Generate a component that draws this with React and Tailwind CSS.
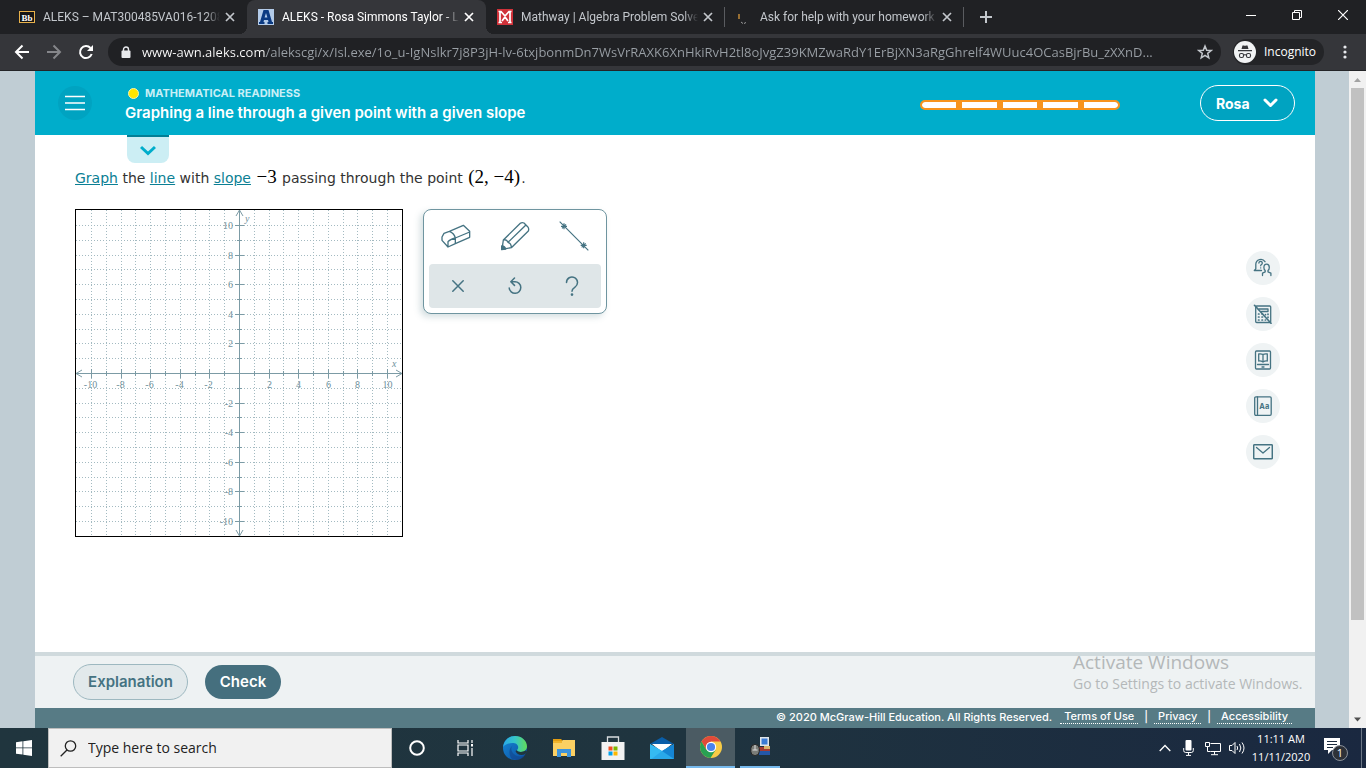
import React from "react";

const UI = "font-['Open_Sans','Noto_Sans',sans-serif]";
const COMPACT = "font-['Roboto','Noto_Sans',sans-serif]";
const BRAND = "font-['Inter','Liberation_Sans',sans-serif]";

/* ---------- browser chrome ---------- */

function CloseGlyph({ className = "" }) {
  return (
    <svg width="10" height="10" viewBox="0 0 10 10" className={className} fill="none" stroke="currentColor" strokeWidth="1.7">
      <path d="M1 1l8 8M9 1L1 9" />
    </svg>
  );
}

function BlackboardIcon() {
  return (
    <svg width="16" height="16" viewBox="0 0 16 16">
      <rect x="0.5" y="2.5" width="15" height="11" fill="#151515" stroke="#e8b14a" />
      <text x="8" y="11.5" fontSize="9" fontWeight="700" textAnchor="middle" fill="#fff" fontFamily="Liberation Serif, serif">Bb</text>
    </svg>
  );
}

function AleksIcon() {
  return (
    <svg width="16" height="16" viewBox="0 0 16 16">
      <rect width="16" height="16" fill="#b3cbe9" />
      <path fillRule="evenodd" fill="#0b3a82" d="M5.500 1h5l3.500 12h1v2h-5.500v-2h1l-.5-2H6l-.5 2h1v2H1v-2h1zM8 4L6.600 8.500h2.800z" />
    </svg>
  );
}

function MathwayIcon() {
  return (
    <svg width="16" height="16" viewBox="0 0 16 16">
      <rect width="16" height="16" fill="#d0323a" />
      <path d="M1.500 2.500H4l4 4.500 4-4.500h2.500M3 3v10M13 3v10M1.500 13.500h3.500M11 13.500h3.500M5 12l3-4 3 4" fill="none" stroke="#fff" strokeWidth="1.700" />
    </svg>
  );
}

function HelpSiteIcon() {
  return (
    <svg width="16" height="16" viewBox="0 0 16 16">
      <path d="M3 5v5" stroke="#d99a3c" strokeWidth="1.300" />
      <path d="M5 13l2 1.500M10 13.500l-2 1" stroke="#9a9a9a" strokeWidth="1" />
    </svg>
  );
}

function Tab({ icon, title, active, divider }) {
  return (
    <div className={"relative flex h-full w-[239px] items-center pl-[11px] " + (active ? "rounded-t-lg bg-[#35363a]" : "")}>
      {active && (
        <>
          <span className="absolute bottom-0 -left-2 size-2 bg-[radial-gradient(circle_at_0_0,transparent_8px,#35363a_8px)]" />
          <span className="absolute -right-2 bottom-0 size-2 bg-[radial-gradient(circle_at_100%_0,transparent_8px,#35363a_8px)]" />
        </>
      )}
      <button type="button" className="flex min-w-0 flex-1 items-center gap-2 text-left">
        <span className="shrink-0">{icon}</span>
        <span
          className={
            "min-w-0 flex-1 text-[12px] leading-4 whitespace-nowrap [mask-image:linear-gradient(to_right,#000_92%,transparent)] " +
            COMPACT +
            (active ? " text-white" : " text-[#c3c7cc]")
          }
        >
          {title}
        </span>
      </button>
      <button type="button" aria-label="Close tab" className={"mr-[7px] flex size-5 items-center justify-center " + (active ? "text-white" : "text-[#c3c7cc]")}>
        <CloseGlyph />
      </button>
      {divider && <span className="absolute top-[7px] right-0 h-5 w-px bg-[#5a5c60]" />}
    </div>
  );
}

function TabStrip() {
  return (
    <div className="flex h-[34px] shrink-0 bg-[#202124] pl-2">
      <Tab icon={<BlackboardIcon />} title="ALEKS – MAT300485VA016-1208" />
      <Tab active icon={<AleksIcon />} title="ALEKS - Rosa Simmons Taylor - Le" />
      <Tab divider icon={<MathwayIcon />} title="Mathway | Algebra Problem Solve" />
      <Tab divider icon={<HelpSiteIcon />} title="Ask for help with your homework" />
      <button type="button" aria-label="New tab" className="flex w-11 items-center justify-center text-[#c3c7cc]">
        <svg width="12" height="12" viewBox="0 0 12 12" stroke="currentColor" strokeWidth="2"><path d="M6 0v12M0 6h12" /></svg>
      </button>
      <div className="ml-auto flex h-[29px] text-white">
        <button type="button" aria-label="Minimize" className="flex w-[46px] items-center justify-center">
          <svg width="10" height="10" viewBox="0 0 10 10" stroke="currentColor"><path d="M0 5.500h10" /></svg>
        </button>
        <button type="button" aria-label="Restore" className="flex w-[46px] items-center justify-center">
          <svg width="10" height="10" viewBox="0 0 10 10" stroke="currentColor" fill="none"><path d="M.5 2.500h7v7h-7zM2.500 2.500v-2h7v7h-2" /></svg>
        </button>
        <button type="button" aria-label="Close" className="flex w-[46px] items-center justify-center">
          <svg width="10" height="10" viewBox="0 0 10 10" stroke="currentColor" strokeWidth="1.200"><path d="M0 0l10 10M10 0L0 10" /></svg>
        </button>
      </div>
    </div>
  );
}

function Toolbar() {
  return (
    <div className="flex h-[37px] shrink-0 items-center border-b border-[#232427] bg-[#35363a]">
      <div className="flex w-[108px] shrink-0 items-center pl-[14px] text-white">
        <button type="button" aria-label="Back" className="flex w-8">
          <svg width="16" height="16" viewBox="0 0 16 16" fill="none" stroke="currentColor" strokeWidth="2"><path d="M15 8H2M8.500 1.500L2 8l6.500 6.500" /></svg>
        </button>
        <button type="button" aria-label="Forward" className="flex w-8 text-[#85868a]">
          <svg width="16" height="16" viewBox="0 0 16 16" fill="none" stroke="currentColor" strokeWidth="2"><path d="M1 8h13M7.500 1.500L14 8l-6.500 6.500" /></svg>
        </button>
        <button type="button" aria-label="Reload" className="flex">
          <svg width="16" height="16" viewBox="0 0 16 16" fill="none"><path d="M13.700 10A6 6 0 1 1 12.500 4" stroke="#fff" strokeWidth="2" /><path d="M15 1v6H9z" fill="#fff" /></svg>
        </button>
      </div>
      <div className="flex h-7 min-w-0 flex-1 items-center rounded-full bg-[#202124] pr-2 pl-[13px]">
        <svg width="10" height="13" viewBox="0 0 10 13" className="shrink-0"><path d="M2.500 5V3.500a2.500 2.500 0 0 1 5 0V5" fill="none" stroke="#e8eaed" strokeWidth="1.400" /><rect x="0.500" y="4.500" width="9" height="7.500" rx="1" fill="#e8eaed" /></svg>
        <input
          type="text"
          aria-label="Address"
          readOnly
          className="ml-[11px] min-w-0 flex-1 bg-[linear-gradient(to_right,#ffffff_124px,#9aa0a6_124px)] bg-clip-text text-[13px] leading-5 text-transparent outline-none"
          value="www-awn.aleks.com/alekscgi/x/Isl.exe/1o_u-IgNslkr7j8P3jH-lv-6txjbonmDn7WsVrRAXK6XnHkiRvH2tl8oJvgZ39KMZwaRdY1ErBjXN3aRgGhrelf4WUuc4OCasBjrBu_zXXnD..."
        />
        <button type="button" aria-label="Bookmark" className="ml-3">
          <svg width="16" height="16" viewBox="0 0 16 16" fill="none" stroke="#c3c7cc" strokeWidth="1.500"><path d="M8 2l1.700 4.200 4.500.3-3.500 2.900 1.100 4.400L8 11.400l-3.800 2.400 1.100-4.400-3.500-2.900 4.500-.3z" /></svg>
        </button>
      </div>
      <button type="button" className="ml-3 flex h-[26px] w-[91px] items-center gap-2 rounded-full bg-[#232427] pl-[1px] text-[12px] text-white">
        <svg width="22" height="22" viewBox="0 0 22 22">
          <circle cx="11" cy="11" r="11" fill="#f1f3f4" />
          <path d="M7.500 8l1-3.500h1.700l.8.400.8-.4h1.700l1 3.500z M4 9h14v1.200H4z" fill="#35363a" />
          <g fill="none" stroke="#35363a" strokeWidth="1.100"><rect x="5.500" y="12.500" width="4" height="4" rx="1.500" /><rect x="12.500" y="12.500" width="4" height="4" rx="1.500" /><path d="M9.500 13.800h3" /></g>
        </svg>
        Incognito
      </button>
      <button type="button" aria-label="Menu" className="flex w-[42px] justify-center">
        <svg width="4" height="14" viewBox="0 0 4 14" fill="#e8eaed"><circle cx="2" cy="2" r="1.600" /><circle cx="2" cy="7" r="1.600" /><circle cx="2" cy="12" r="1.600" /></svg>
      </button>
    </div>
  );
}

/* ---------- page ---------- */

function Header() {
  return (
    <header className={"flex h-16 shrink-0 items-center bg-[#00adcb] pr-5 pl-[23px] " + BRAND}>
      <button type="button" aria-label="Open menu" className="flex size-[34px] items-center justify-center rounded-full bg-[#00a3c1]">
        <svg width="20" height="16" viewBox="0 0 20 16" stroke="#fff" strokeWidth="1.500"><path d="M0 1.500h20M0 8h20M0 14.500h20" /></svg>
      </button>
      <div className="mt-[2px] ml-[33px] text-white">
        <div className="flex items-center gap-[6px] pl-[3px] text-[11px] leading-[18px] font-bold text-[#c9eff6]">
          <span className="size-[11px] rounded-full border border-[#f7f3b0] bg-[#ffe600]" />
          MATHEMATICAL READINESS
        </div>
        <h1 className="text-[15px] leading-[22px] font-semibold">Graphing a line through a given point with a given slope</h1>
      </div>
      <div className="ml-auto flex items-center">
        <div role="progressbar" aria-label="Topic progress" aria-valuenow={0} className="mt-1 flex h-[10px] w-[200px] gap-[6px] overflow-hidden rounded-full border-2 border-[#f7941e] bg-[#f7941e]">
          <span className="flex-1 rounded-l-full bg-white" />
          <span className="flex-1 bg-white" />
          <span className="flex-1 bg-white" />
          <span className="flex-1 bg-white" />
          <span className="flex-1 rounded-r-full bg-white" />
        </div>
        <button type="button" className="ml-20 flex h-9 w-[95px] items-center justify-between rounded-full border border-white bg-[#00a3c1] pr-4 pl-[15px] text-[14px] font-bold text-white">
          Rosa
          <svg width="15" height="10" viewBox="0 0 15 10" fill="none" stroke="#fff" strokeWidth="3" strokeLinecap="round" strokeLinejoin="round"><path d="M2 2l5.500 5.500L13 2" /></svg>
        </button>
      </div>
    </header>
  );
}

const STEP = 14.8;
const MID = 164.5;
const units = Array.from({ length: 21 }, (_, i) => i - 10).filter((n) => n !== 0);
const at = (n) => Math.floor(MID + n * STEP) + 0.5;

function Graph() {
  return (
    <svg width="328" height="328" viewBox="0 0 328 328" role="img" aria-label="Coordinate plane" className="shrink-0">
      <g stroke="#a3bac1" strokeDasharray="1 2">
        {units.map((n) => (
          <path key={n} d={`M${at(n)} 1V327M1 ${at(n)}H327`} />
        ))}
      </g>
      <g stroke="#7c9ba5" fill="none">
        <path d="M164.500 1V327M1 164.500H327" />
        {units.map((n) => {
          const r = n % 2 === 0 ? 4.5 : 2.5;
          return <path key={n} d={`M${at(n)} ${MID - r}v${2 * r}M${MID - r} ${at(n)}h${2 * r}`} />;
        })}
        <path d="M161 7l3.500-6L168 7M161 321l3.500 6 3.500-6M7 161l-6 3.500L7 168M321 161l6 3.500-6 3.500" />
      </g>
      <g fill="#6f919c" fontFamily="Liberation Serif, serif" fontSize="10">
        {units.filter((n) => n % 2 === 0).map((n) => (
          <React.Fragment key={n}>
            <text x={at(n) - (n < 0 ? 1 : 0)} y="179" textAnchor="middle">{n}</text>
            <text x="158" y={at(-n) + 3.5} textAnchor="end">{n}</text>
          </React.Fragment>
        ))}
        <text x="170" y="13" fontStyle="italic">y</text>
        <text x="317" y="158" fontStyle="italic">x</text>
      </g>
      <rect x="0.5" y="0.5" width="327" height="327" fill="none" stroke="#000" />
    </svg>
  );
}

function ToolButton({ label, children }) {
  return (
    <button type="button" aria-label={label} className="flex items-center justify-center text-[#457382]">
      {children}
    </button>
  );
}

function Tools() {
  return (
    <div className="flex h-[105px] w-[184px] shrink-0 flex-col rounded-lg border border-[#6f95a0] bg-white pb-[5px] shadow-[-3px_3px_6px_rgba(90,130,140,0.25)]">
      <div className="mx-[3px] grid h-[52px] grid-cols-3">
        <ToolButton label="Eraser">
          <svg width="32" height="26" viewBox="92 70 96 78" fill="none" stroke="currentColor" strokeWidth="4" strokeLinejoin="round">
            <path d="M98 112L104 101L120 95L162 77L181 95V113L138 132L116 142L98 122zM120 95Q135 101 138 115V132M138 115L181 97M138 115Q122 119 116 126V142" />
          </svg>
        </ToolButton>
        <ToolButton label="Pencil">
          <svg width="30" height="30" viewBox="270 62 90 90" fill="none" stroke="currentColor" strokeWidth="4" strokeLinejoin="round">
            <path d="M276 147L280 119L331 69Q336 65 342 68L353 79Q358 85 355 92L304 142L276 147M280 119Q290 116 294 126Q304 129 304 142M294 126L347 75" />
            <path d="M275 148V137Q284 136 287 146z" fill="currentColor" />
          </svg>
        </ToolButton>
        <ToolButton label="Line">
          <svg width="30" height="30" viewBox="446 61 90 90" fill="none" stroke="currentColor" strokeWidth="3.500">
            <path d="M448 63L534 149M452 77H470M461 68V86M455 83L467 71M511 134H529M520 125V143M514 140L526 128" />
          </svg>
        </ToolButton>
      </div>
      <div className="mx-[5px] mt-auto grid h-11 grid-cols-3 rounded bg-[#dfe6e8]">
        <ToolButton label="Clear">
          <svg width="12" height="12" viewBox="0 0 12 12" fill="none" stroke="currentColor" strokeWidth="1.500" strokeLinecap="round"><path d="M.8.8l10.400 10.400M11.200.8L.8 11.200" /></svg>
        </ToolButton>
        <ToolButton label="Undo">
          <svg width="16" height="18" viewBox="0 0 16 18" fill="none" stroke="currentColor" strokeWidth="1.500" strokeLinecap="round" strokeLinejoin="round"><path d="M2.200 11a5.800 5.800 0 1 0 5.800-6.300H4M7.500 1L3.800 4.700l3.700 3.700" /></svg>
        </ToolButton>
        <ToolButton label="Help">
          <svg width="14" height="20" viewBox="0 0 14 20" fill="none" stroke="currentColor" strokeWidth="1.500" strokeLinecap="round"><path d="M1.500 6.500a5.500 5.500 0 1 1 8.500 4.600c-2.200 1.500-3 2.100-3 4.200" /><circle cx="7" cy="18.600" r=".6" fill="currentColor" /></svg>
        </ToolButton>
      </div>
    </div>
  );
}

function SideButton({ label, children }) {
  return (
    <button type="button" aria-label={label} className="flex size-[34px] items-center justify-center rounded-full bg-[#eff3f4]">
      <svg width="20" height="20" viewBox="0 0 20 20" fill="none" stroke="#457382" strokeWidth="1.300" strokeLinejoin="round" strokeLinecap="round">
        {children}
      </svg>
    </button>
  );
}

function SideTools() {
  return (
    <div className="flex flex-col gap-3">
      <SideButton label="Ask for help">
        <path d="M8.500 12.500H1.300l1.500-1.600V6.300A5 5 0 0 1 12 3.700" />
        <path d="M5.900 5a1.700 1.700 0 1 1 2.600 1.500q-.8.500-.8 1.300M7.700 9.800v.1" />
        <path d="M9.500 17.500v-2.300l2.700-1.300v-1.300q-1.300-1.200-1.300-3.200 0-3.200 2.700-3.200t2.700 3.200q0 2-1.300 3.200v1.300l2.900 1.300v2.300" />
      </SideButton>
      <SideButton label="Calculator not available">
        <rect x="2.700" y="2" width="15" height="16.500" rx="1" />
        <path d="M6 5h9v2.500H8.500" />
        <path d="M1.500 1.300l16.500 18" strokeWidth="1.700" />
        <path d="M5.500 10h.5M9 10h.5M5.500 13h.5M9 13h.5M5.500 16h.5M9 16h.5M12.300 16h.2M15 10v.500M15 13v.500M12.500 10.500v.2" strokeWidth="1.700" />
      </SideButton>
      <SideButton label="Textbook">
        <rect x="2.500" y="1" width="15" height="18" rx="1" />
        <path d="M10 4.500v7.500M10 4.500Q8 3.500 5.700 4v7q2.300-.3 4.300 1 2-1.300 4.300-1V4Q12 3.500 10 4.500M4.500 14.500h11M9 17h2" />
      </SideButton>
      <SideButton label="Dictionary">
        <rect x="1.700" y="0.800" width="16.500" height="18.500" rx="1.200" />
        <path d="M4.500 1v18" />
        <text x="11.300" y="12.500" fontSize="7.500" fontWeight="700" textAnchor="middle" fill="#457382" stroke="none" fontFamily="Inter, sans-serif">Aa</text>
      </SideButton>
      <SideButton label="Message">
        <rect x="0.700" y="2.700" width="18.600" height="14" rx="0.800" strokeWidth="1.500" />
        <path d="M3.500 5.500L10 11l6.500-5.500" />
      </SideButton>
    </div>
  );
}

function Term({ children }) {
  return <a href="#" className="text-[#0b7f94] underline">{children}</a>;
}

function MathText({ children }) {
  return <span className="mx-[1px] font-['Liberation_Serif',serif] text-[19px] text-black">{children}</span>;
}

function Question() {
  return (
    <main className="relative flex min-h-0 flex-1 justify-between bg-white pr-[35px] pl-10">
      <div>
        <button type="button" aria-label="Show topic details" className="ml-[52px] flex h-7 w-[42px] items-center justify-center rounded-b-lg border-t-2 border-[#007f96] bg-[#cceef4]">
          <svg width="16" height="11" viewBox="0 0 16 11" fill="none" stroke="#00adcb" strokeWidth="3"><path d="M1 2l7 6.500L15 2" /></svg>
        </button>
        <p className="mt-1 h-5 text-[14px] leading-5 whitespace-nowrap text-[#333] font-['DejaVu_Sans',sans-serif]">
          <Term>Graph</Term> the <Term>line</Term> with <Term>slope</Term> <MathText>−3</MathText> passing through the point <MathText>(2, −4)</MathText>.
        </p>
        <div className="mt-[22px] flex items-start gap-5">
          <Graph />
          <Tools />
        </div>
      </div>
      <div className="pt-[116px]">
        <SideTools />
      </div>
    </main>
  );
}

function FooterLink({ children }) {
  return <a href="#" className="border-b border-dotted border-white px-1 leading-[14px]">{children}</a>;
}

function PageFooter() {
  return (
    <div className={BRAND}>
      <div className="flex h-14 items-center gap-[17px] border-t-4 border-[#d0dadd] bg-[#eef2f3] pl-[38px] text-[15px] font-semibold">
        <button type="button" className="h-9 w-[115px] rounded-full border border-[#9db8c0] bg-[#e2e9eb] pt-[1px] text-[#457382]">Explanation</button>
        <button type="button" className="h-[34px] w-[76px] rounded-full bg-[#456f7e] pt-[1px] text-white">Check</button>
      </div>
      <footer className="flex h-5 items-start justify-end bg-[#577b85] pt-[1px] pr-[23px] text-[11px] leading-4 font-medium text-white">
        <span className="mr-2">© 2020 McGraw-Hill Education. All Rights Reserved.</span>
        <FooterLink>Terms of Use</FooterLink>
        <span className="px-[6px]">|</span>
        <FooterLink>Privacy</FooterLink>
        <span className="px-[6px]">|</span>
        <FooterLink>Accessibility</FooterLink>
      </footer>
    </div>
  );
}

function Scrollbar() {
  return (
    <div className="flex w-[17px] shrink-0 flex-col items-center bg-[#f1f1f1]">
      <svg width="17" height="17" viewBox="0 0 17 17" className="shrink-0"><path d="M5 11l3.500-4 3.500 4z" fill="#a3a3a3" /></svg>
      <div className="h-[532px] w-[13px] bg-[#c1c1c1]" />
      <svg width="17" height="17" viewBox="0 0 17 17" className="mt-auto shrink-0"><path d="M5 6.500l3.500 4 3.500-4z" fill="#505050" /></svg>
    </div>
  );
}

/* ---------- taskbar ---------- */

function TaskButton({ label, className = "w-[49px]", children }) {
  return (
    <button type="button" aria-label={label} className={"flex h-10 items-center justify-center " + className}>
      {children}
    </button>
  );
}

function EdgeIcon() {
  return (
    <svg width="24" height="24" viewBox="0 0 24 24">
      <defs>
        <linearGradient id="edgeTop" x1="0" x2="1"><stop offset="0" stopColor="#2aa7e8" /><stop offset=".5" stopColor="#36c6c8" /><stop offset="1" stopColor="#62dc58" /></linearGradient>
        <linearGradient id="edgeLow" x1="0" y1="0" x2="1" y2="1"><stop offset="0" stopColor="#1688d6" /><stop offset="1" stopColor="#0c4fa0" /></linearGradient>
      </defs>
      <circle cx="12" cy="12" r="12" fill="url(#edgeLow)" />
      <path d="M0 11C1 4 6 0 12 0c7 0 12 5 12 10.500 0 3.500-3 5.500-6 5.500-2.500 0-4-.8-4-1.700 0-.8 1.200-1.100 1.200-3C15.200 8.500 12.500 7 9.500 7 5 7 1.500 9 0 11z" fill="url(#edgeTop)" />
      <path d="M9.500 9.500C7 12 8.500 18 14 20c3 1 6 .3 8-1l-2 3-6 2-5-1C6 20 5 13 9.500 9.500z" fill="#123f86" opacity=".55" />
      <path d="M24 15.500L22.300 18c-3.500 2-8.500 1-9.800-3l1.500-.7c.5 1.800 5 2.500 8.300.2z" fill="#20353e" />
    </svg>
  );
}

function Taskbar() {
  return (
    <div className={"flex h-10 shrink-0 items-center bg-[linear-gradient(to_right,#20353e,#1f343f_50%,#1a2840)] text-white " + UI}>
      <TaskButton label="Start" className="w-12">
        <svg width="16" height="16" viewBox="0 0 16 16" fill="#fff"><path d="M0 2.200L6.500 1.300v6.200H0zM7.300 1.200L16 0v7.500H7.300zM0 8.300h6.500v6.300L0 13.700zM7.300 8.300H16V16l-8.700-1.200z" /></svg>
      </TaskButton>
      <label className="flex h-10 w-[344px] items-center gap-[11px] border border-[#bdbdbd] bg-[#f1f1f1] pl-[11px] text-[#222]">
        <svg width="17" height="17" viewBox="0 0 17 17" fill="none" stroke="#222" strokeWidth="1.300"><circle cx="10.500" cy="6" r="5.200" /><path d="M7 10L.7 16.300" /></svg>
        <input type="text" aria-label="Search" placeholder="Type here to search" className="min-w-0 flex-1 bg-transparent text-[14px] leading-5 text-[#222] outline-none placeholder:text-[#222]" />
      </label>
      <TaskButton label="Cortana">
        <svg width="16" height="16" viewBox="0 0 16 16" fill="none" stroke="#fff" strokeWidth="2"><circle cx="8" cy="8" r="6.800" /></svg>
      </TaskButton>
      <TaskButton label="Task view">
        <svg width="17" height="16" viewBox="0 0 17 16" fill="none" stroke="#fff" strokeWidth="1.200"><path d="M1 0v3h10V0M1 16v-3h10v3M1 5h10v6H1zM15 0v3M15 8v8" /><rect x="14" y="4" width="2" height="2.500" fill="#fff" stroke="none" /></svg>
      </TaskButton>
      <TaskButton label="Edge"><EdgeIcon /></TaskButton>
      <TaskButton label="File Explorer">
        <svg width="22" height="20" viewBox="0 0 22 20"><path d="M0 1h8l2 2H0z" fill="#e39d12" /><path d="M0 3h9l1-1h12v16H0z" fill="#fbd063" /><path d="M0 3h9v2H0z" fill="#f0b42c" /><path d="M4 11h14v8h-4v-4H8v4H4z" fill="#3d94dc" /></svg>
      </TaskButton>
      <TaskButton label="Store">
        <svg width="24" height="24" viewBox="0 0 24 24"><path d="M6.500 6V1h11v5" fill="none" stroke="#d8dcdf" strokeWidth="1.300" /><path d="M.500 6h23v18H.500z" fill="#f2f2f2" /><path d="M7.500 10.500h4v4h-4z" fill="#f04e23" /><path d="M12.500 10.500h4v4h-4z" fill="#7db700" /><path d="M7.500 15.500h4v4h-4z" fill="#00a3ee" /><path d="M12.500 15.500h4v4h-4z" fill="#fdb800" /></svg>
      </TaskButton>
      <TaskButton label="Mail">
        <svg width="24" height="22" viewBox="0 0 24 22"><path d="M0 7L12 0l12 7z" fill="#0a5ea8" /><path d="M2 7h20L12 15z" fill="#fff" /><path d="M0 7l12 7 12-7v15H0z" fill="#29a8ea" /><path d="M0 7l12 7L1.500 22H0z" fill="#35baf2" /><path d="M24 7l-12 7 12 8z" fill="#1585d4" /></svg>
      </TaskButton>
      <TaskButton label="Chrome" className="w-[49px] border-b-2 border-[#76b9ed] bg-[#4b5b63]">
        <svg width="22" height="22" viewBox="0 0 22 22"><circle cx="11" cy="11" r="11" fill="#f8cb46" /><path d="M11 11L1.500 5.500A11 11 0 0 1 20.500 5.500H11z" fill="#e04a3a" /><path d="M1.500 5.500L6.300 13.700 11 11V5.500z" fill="#e04a3a" /><path d="M1.500 5.500A11 11 0 0 0 10.500 22L15.700 13.700 11 16 6.300 13.700z" fill="#28a153" /><circle cx="11" cy="11" r="5.200" fill="#fff" /><circle cx="11" cy="11" r="4.100" fill="#4a83ec" /></svg>
      </TaskButton>
      <TaskButton label="Device manager" className="ml-[5px] w-10 border-b-2 border-[#76b9ed]">
        <svg width="21" height="20" viewBox="0 0 21 20"><path d="M10 0h9v9h-9z" fill="#dfe5ea" /><path d="M11.500 1.500h6v6h-6z" fill="#3a7bd5" /><path d="M9 10h11v4H9z" fill="#a43a32" /><path d="M14 9h6v3h-6z" fill="#d8b26a" /><path d="M9 14h11v4H9z" fill="#2457a8" /><rect x=".8" y="7.500" width="8.500" height="11" rx="4" fill="#7b7d78" stroke="#222" /><path d="M5 8v5M2.500 13h5" stroke="#ddd" /></svg>
      </TaskButton>
      <div className="ml-auto flex items-center">
        <button type="button" aria-label="Show hidden icons" className="mr-3">
          <svg width="12" height="8" viewBox="0 0 12 8" fill="none" stroke="#fff" strokeWidth="1.300"><path d="M.7 7L6 1.500 11.300 7" /></svg>
        </button>
        <svg width="11" height="16" viewBox="0 0 11 16" className="mr-[11px]"><rect x="2.500" y="0" width="6" height="10.500" rx="1" fill="#fff" /><path d="M.7 8v2.500q0 2 2 2h5.600q2 0 2-2V8M5.500 12.500V15M3 15.400h5" fill="none" stroke="#fff" /></svg>
        <svg width="16" height="15" viewBox="0 0 16 15" className="mr-2" fill="none" stroke="#fff"><path d="M5.500 2.500h10v8h-10M.5 1.500h4v4h-4zM2.500 5.500v5h3M9.500 10.500v3M6 13.700h7" /></svg>
        <svg width="16" height="14" viewBox="0 0 16 14" className="mr-[6px]" fill="none" stroke="#fff"><path d="M.5 4.500h2.500L6 1.500v11L3 9.500H.5zM8 5q1.300 2 0 4M10.500 3q2.700 4 0 8M13 1.500q4 5.500 0 11" /></svg>
        <div className="w-[60px] text-center text-[11px] leading-[18px] whitespace-nowrap">
          <div>11:11 AM</div>
          <div>11/11/2020</div>
        </div>
        <button type="button" aria-label="Notifications" className="relative mx-3 h-6 w-[26px]">
          <svg width="26" height="26" viewBox="0 0 26 26"><path d="M1 2h16v12H9l-4 4v-4H1z" fill="#fff" /><path d="M4 5.500h10M4 8.500h10M4 11.500h6" stroke="#1c2c3f" /><circle cx="17" cy="17" r="7.500" fill="#2d3138" stroke="#8a9099" /><text x="17" y="21" fontSize="11" textAnchor="middle" fill="#fff" fontFamily="Open Sans, sans-serif">1</text></svg>
        </button>
        <span className="mr-1 h-10 w-px bg-[#6b7685]" />
      </div>
    </div>
  );
}

export default function App() {
  return (
    <div className={"relative flex h-screen flex-col overflow-hidden " + UI}>
      <TabStrip />
      <Toolbar />
      <div className="flex min-h-0 flex-1 bg-[#c0cdd4]">
        <div className="mr-[34px] ml-[35px] flex min-w-0 flex-1 flex-col">
          <Header />
          <Question />
          <PageFooter />
        </div>
        <Scrollbar />
      </div>
      <Taskbar />
      <div className="pointer-events-none absolute right-[57px] bottom-[74px] w-[236px] text-[#b4b8b9]">
        <div className="text-[19px] leading-6">Activate Windows</div>
        <div className="text-[14px] leading-5">Go to Settings to activate Windows.</div>
      </div>
    </div>
  );
}
